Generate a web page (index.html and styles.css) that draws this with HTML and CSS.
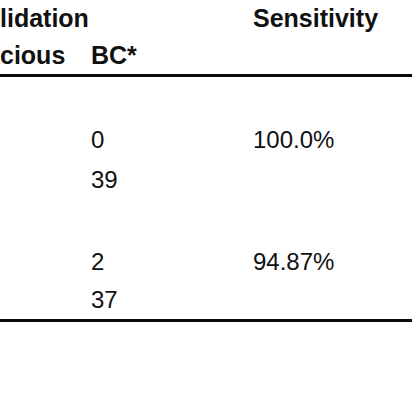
FILE: index.html
```html
<!DOCTYPE html>
<html>
<head>
<meta charset="utf-8">
<link rel="stylesheet" href="styles.css">
</head>
<body>
<div class="table">
  <div class="head">
    <div class="row hrow">
      <span class="cell">lidation</span>
      <span class="cell"></span>
      <span class="cell">Sensitivity</span>
    </div>
    <div class="row hrow">
      <span class="cell">cious</span>
      <span class="cell">BC*</span>
      <span class="cell"></span>
    </div>
  </div>
  <div class="group g1">
    <div class="row brow r40">
      <span class="cell"></span>
      <span class="cell">0</span>
      <span class="cell">100.0%</span>
    </div>
    <div class="row brow r40">
      <span class="cell"></span>
      <span class="cell">39</span>
      <span class="cell"></span>
    </div>
  </div>
  <div class="group g2">
    <div class="row brow r39">
      <span class="cell"></span>
      <span class="cell">2</span>
      <span class="cell">94.87%</span>
    </div>
    <div class="row brow r38">
      <span class="cell"></span>
      <span class="cell">37</span>
      <span class="cell"></span>
    </div>
  </div>
</div>
</body>
</html>
```

FILE: styles.css
```css
html, body {
  margin: 0;
  padding: 0;
  background: #ffffff;
}

body {
  font-family: "Liberation Sans", Arial, sans-serif;
  color: #111111;
  width: 412px;
  height: 412px;
  overflow: hidden;
}

.table {
  width: 412px;
}

.row {
  display: grid;
  grid-template-columns: 91px 162px 1fr;
  white-space: nowrap;
}

.head {
  border-bottom: 3px solid #0a0a0a;
}

.hrow {
  font-weight: bold;
  font-size: 25px;
  line-height: 37px;
}

.brow {
  font-size: 24px;
}

.r40 { line-height: 40px; }
.r39 { line-height: 39px; }
.r38 { line-height: 38px; }

.g1 {
  padding-top: 43px;
}

.g2 {
  padding-top: 42px;
  border-bottom: 3px solid #0a0a0a;
}
```
